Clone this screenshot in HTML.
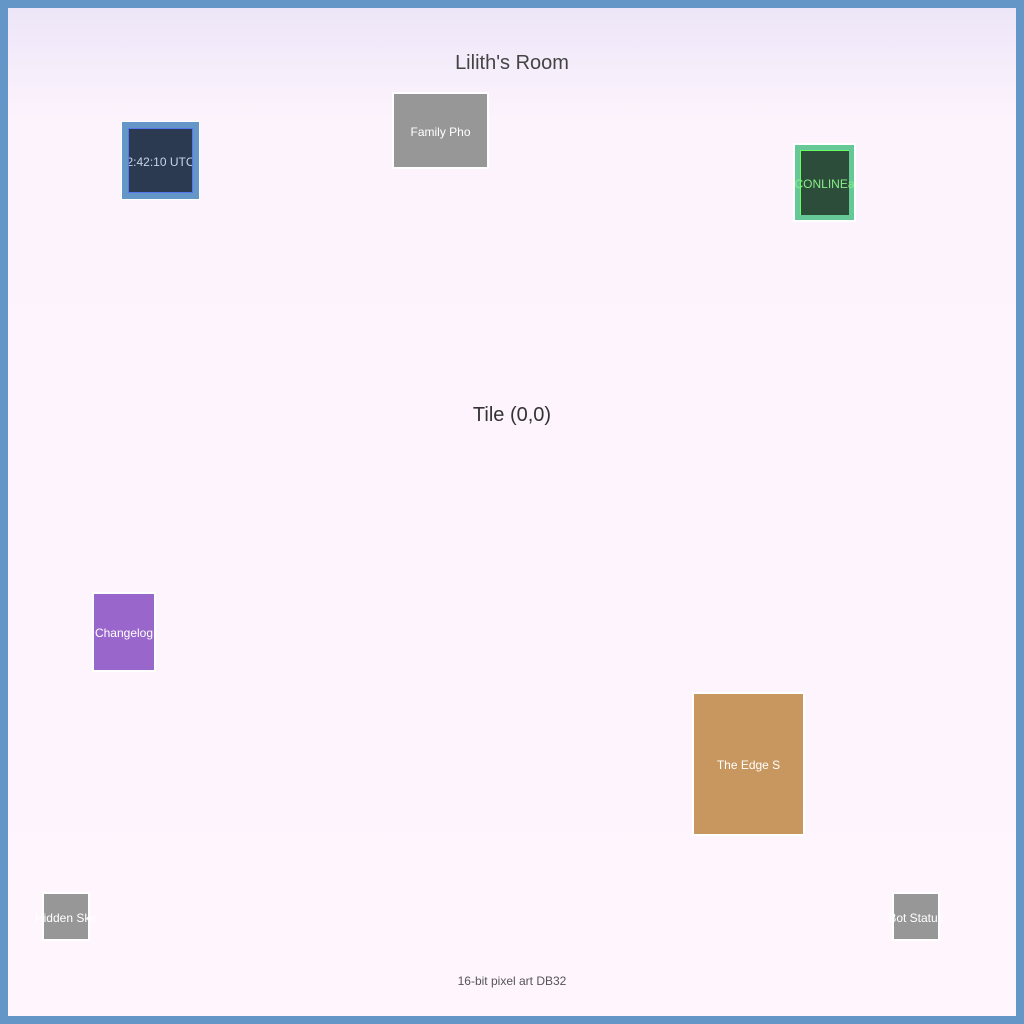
<!DOCTYPE html>
<html><head><style>
html,body{margin:0;padding:0;}
body{width:1024px;height:1024px;position:relative;overflow:hidden;background:#6497c8;font-family:"Liberation Sans",sans-serif;}
.in{position:absolute;left:8px;top:8px;width:1008px;height:1008px;background:linear-gradient(#ede6f8 0px,#fdf3fd 110px,#fef5fd 1008px);}
.b{position:absolute;box-sizing:border-box;border:2px solid #fff;color:#fff;font-size:12px;display:flex;align-items:center;justify-content:center;white-space:nowrap;overflow:visible;padding-top:2px;}
.t{position:absolute;width:1024px;left:0;text-align:center;}
.c{position:absolute;left:50%;top:50%;transform:translate(-50%,-50%);margin-top:1px;}
</style></head><body>
<div class="in"></div>
<div class="t" style="top:52px;font-size:20px;color:#444;">Lilith's Room</div>
<div class="t" style="top:404px;font-size:20px;color:#333;">Tile (0,0)</div>
<div class="t" style="top:974px;font-size:12px;color:#555;">16-bit pixel art DB32</div>

<div class="b" style="left:121px;top:121px;width:79px;height:79px;background:#6497c8;border-width:1px;">
  <div style="position:absolute;left:6px;top:6px;width:65px;height:65px;box-sizing:border-box;border:1px solid #5577ee;background:#2b3a51;overflow:hidden;">
    <span class="c" style="color:#c8d4e8;">2:42:10 UTC</span>
  </div>
</div>

<div class="b" style="left:392px;top:92px;width:97px;height:77px;background:#979797;">Family Pho</div>

<div class="b" style="left:793px;top:143px;width:63px;height:79px;background:#66c896;">
  <div style="position:absolute;left:5px;top:5px;width:49px;height:65px;box-sizing:border-box;border-left:1px solid #66ff66;border-top:1px solid #66ff66;background:#2c4d3a;"></div>
  <span class="c" style="color:#88ee88;">CONLINEa</span>
</div>

<div class="b" style="left:92px;top:592px;width:64px;height:80px;background:#9966cc;"><span class="c">Changelog</span></div>

<div class="b" style="left:692px;top:692px;width:113px;height:144px;background:#c8965f;">The Edge S</div>

<div class="b" style="left:42px;top:892px;width:48px;height:49px;background:#979797;"><span class="c">Hidden Ske</span></div>

<div class="b" style="left:892px;top:892px;width:48px;height:49px;background:#979797;"><span class="c">Bot Status</span></div>
</body></html>
